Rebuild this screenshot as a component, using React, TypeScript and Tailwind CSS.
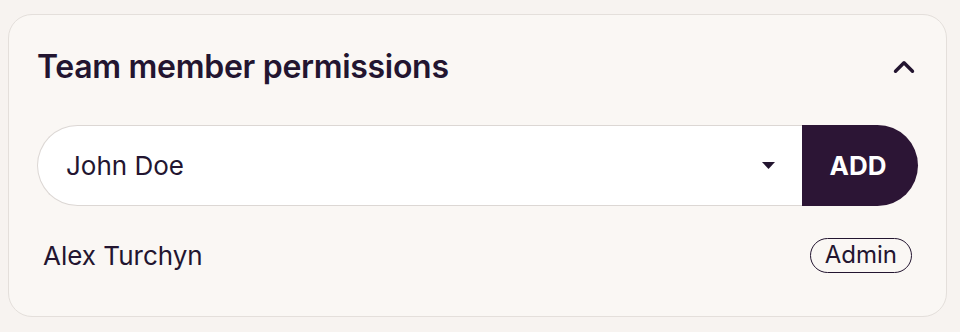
import { ChevronUp } from "lucide-react";

export default function App() {
  return (
    <div className="w-[960px] h-[332px] bg-[#f7f3f0] pt-[14px] pl-[8px] font-['Inter',sans-serif] text-[#231530]">
      <div className="w-[939px] h-[303px] rounded-[24px] border border-[#e4dfdb] bg-[#faf7f4] px-[28px]">
        <div className="flex items-center justify-between pt-[32px] h-[72px]">
          <h2 className="text-[32px] leading-[40px] font-semibold tracking-[-0.3px]">Team member permissions</h2>
          <ChevronUp className="w-[34px] h-[34px] mr-[-3px]" strokeWidth={2.4} />
        </div>

        <div className="flex mt-[38px] h-[81px]">
          <div className="flex-1 flex items-center justify-between rounded-l-full border border-r-0 border-[#dcd7d4] bg-white pl-[28px] pr-[27px]">
            <span className="text-[26px]">John Doe</span>
            <svg width="13" height="7" viewBox="0 0 13 7" className="fill-[#231530]">
              <path d="M0 0 L13 0 L6.5 7 Z" />
            </svg>
          </div>
          <button className="w-[116px] rounded-r-full bg-[#2c1535] text-white text-[26px] font-bold pr-[4px]">ADD</button>
        </div>

        <div className="flex items-center justify-between mt-[31px] h-[36px] px-[6px]">
          <span className="text-[26px]">Alex Turchyn</span>
          <span className="h-[35px] flex items-center rounded-full border-[1.5px] border-[#231530] px-[14px] text-[24px]">Admin</span>
        </div>
      </div>
    </div>
  );
}
